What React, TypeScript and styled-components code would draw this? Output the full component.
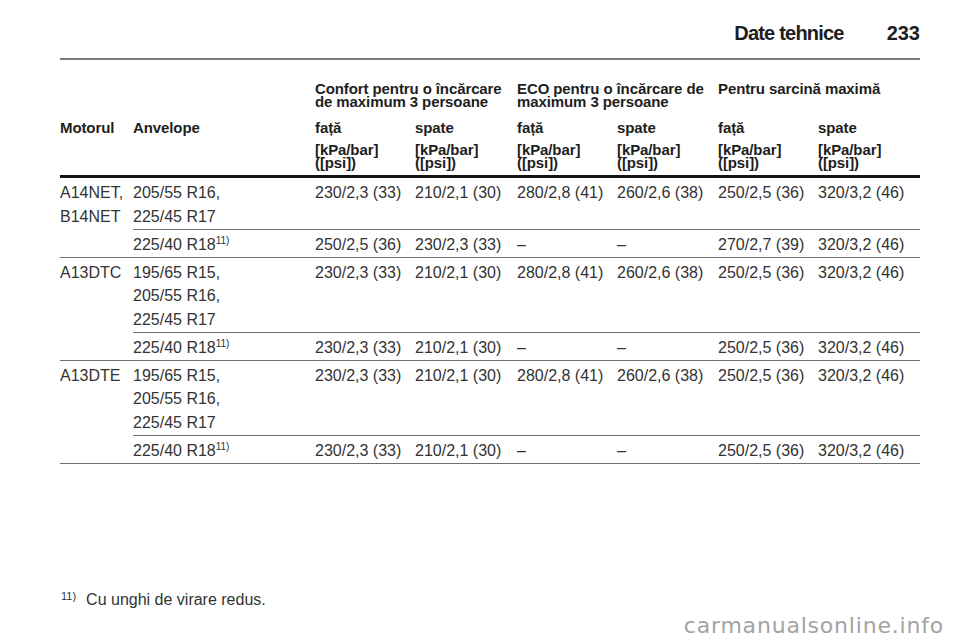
import React from "react";
import styled, { createGlobalStyle } from "styled-components";

const GlobalStyle = createGlobalStyle`
  html, body { margin: 0; padding: 0; background: #ffffff; }
  body { font-family: "Liberation Sans", Arial, sans-serif; color: #333; }
`;

const Page = styled.div`
  position: relative;
  width: 960px;
  height: 642px;
  box-sizing: border-box;
  padding: 0 40px 31px 60px;
  display: flex;
  flex-direction: column;
  overflow: hidden;
`;

const TopBar = styled.header`
  display: flex;
  justify-content: flex-end;
  gap: 43px;
  padding-top: 21px;
  padding-bottom: 13px;
  border-bottom: 2px solid #7a7a7a;
  font-weight: bold;
  font-size: 20px;
  line-height: 24px;
  color: #1e1e1e;
`;

const Title = styled.span`
  letter-spacing: -0.8px;
`;

const PageNo = styled.span`
  letter-spacing: 0;
`;

const Table = styled.table`
  margin-top: 22px;
  width: 860px;
  table-layout: fixed;
  border-collapse: separate;
  border-spacing: 0;
`;

const HeadCell = styled.th<{ $row: 1 | 2 | 3 }>`
  text-align: left;
  vertical-align: top;
  padding: 0;
  font-weight: bold;
  font-size: 15px;
  letter-spacing: -0.1px;
  color: #1e1e1e;
  white-space: pre-line;
  line-height: ${(p) => (p.$row === 2 ? "20px" : "13px")};
  padding-bottom: ${(p) => (p.$row === 1 ? "10px" : p.$row === 2 ? "5px" : "6px")};
  border-bottom: ${(p) => (p.$row === 3 ? "3px solid #151515" : "none")};
`;

const Cell = styled.td`
  vertical-align: top;
  padding: 3px 0 0.5px 0;
  font-size: 16px;
  line-height: 23.5px;
  color: #333;
  white-space: nowrap;
  border-bottom: 1px solid #6e6e6e;
`;

const Line = styled.div``;

const Sup = styled.span`
  font-size: 10px;
  line-height: 0;
  vertical-align: 6px;
`;

const Footnote = styled.div`
  margin-top: auto;
  display: flex;
  align-items: baseline;
  gap: 10px;
  padding-left: 1px;
  font-size: 16px;
  line-height: 20px;
  color: #333;
`;

const FootMark = styled.span`
  font-size: 11px;
  position: relative;
  top: -5px;
`;

const Watermark = styled.div`
  position: absolute;
  right: 16px;
  bottom: 2px;
  font-family: "DejaVu Sans", sans-serif;
  font-size: 22px;
  letter-spacing: 0.8px;
  color: #a3a3a3;
  line-height: 28px;
`;

const colWidths = [73, 182, 100, 102, 100, 101, 100, 102];

type SubRow = { tyres: string[]; sup?: boolean; vals: string[] };
type Group = { motor: string[]; rows: SubRow[] };

const std = ["230/2,3 (33)", "210/2,1 (30)", "280/2,8 (41)", "260/2,6 (38)", "250/2,5 (36)", "320/3,2 (46)"];

const groups: Group[] = [
  {
    motor: ["A14NET,", "B14NET"],
    rows: [
      { tyres: ["205/55 R16,", "225/45 R17"], vals: std },
      { tyres: ["225/40 R18"], sup: true, vals: ["250/2,5 (36)", "230/2,3 (33)", "–", "–", "270/2,7 (39)", "320/3,2 (46)"] },
    ],
  },
  {
    motor: ["A13DTC"],
    rows: [
      { tyres: ["195/65 R15,", "205/55 R16,", "225/45 R17"], vals: std },
      { tyres: ["225/40 R18"], sup: true, vals: ["230/2,3 (33)", "210/2,1 (30)", "–", "–", "250/2,5 (36)", "320/3,2 (46)"] },
    ],
  },
  {
    motor: ["A13DTE"],
    rows: [
      { tyres: ["195/65 R15,", "205/55 R16,", "225/45 R17"], vals: std },
      { tyres: ["225/40 R18"], sup: true, vals: ["230/2,3 (33)", "210/2,1 (30)", "–", "–", "250/2,5 (36)", "320/3,2 (46)"] },
    ],
  },
];

const groupTitles = [
  "Confort pentru o încărcare\nde maximum 3 persoane",
  "ECO pentru o încărcare de\nmaximum 3 persoane",
  "Pentru sarcină maximă",
];

const axles = ["față", "spate", "față", "spate", "față", "spate"];

export default function App() {
  return (
    <>
      <GlobalStyle />
      <Page>
        <TopBar>
          <Title>Date tehnice</Title>
          <PageNo>233</PageNo>
        </TopBar>
        <Table>
          <colgroup>
            {colWidths.map((w, i) => (
              <col key={i} style={{ width: w }} />
            ))}
          </colgroup>
          <thead>
            <tr>
              <HeadCell $row={1} colSpan={2} />
              {groupTitles.map((t) => (
                <HeadCell $row={1} colSpan={2} key={t}>
                  {t}
                </HeadCell>
              ))}
            </tr>
            <tr>
              <HeadCell $row={2}>Motorul</HeadCell>
              <HeadCell $row={2}>Anvelope</HeadCell>
              {axles.map((a, i) => (
                <HeadCell $row={2} key={i}>
                  {a}
                </HeadCell>
              ))}
            </tr>
            <tr>
              <HeadCell $row={3} colSpan={2} />
              {axles.map((_, i) => (
                <HeadCell $row={3} key={i}>
                  {"[kPa/bar]\n([psi])"}
                </HeadCell>
              ))}
            </tr>
          </thead>
          <tbody>
            {groups.map((g) =>
              g.rows.map((r, ri) => (
                <tr key={g.motor[0] + ri}>
                  {ri === 0 && (
                    <Cell rowSpan={g.rows.length}>
                      {g.motor.map((m) => (
                        <Line key={m}>{m}</Line>
                      ))}
                    </Cell>
                  )}
                  <Cell>
                    {r.tyres.map((t) => (
                      <Line key={t}>
                        {t}
                        {r.sup && <Sup>11)</Sup>}
                      </Line>
                    ))}
                  </Cell>
                  {r.vals.map((v, vi) => (
                    <Cell key={vi}>{v}</Cell>
                  ))}
                </tr>
              ))
            )}
          </tbody>
        </Table>
        <Footnote>
          <FootMark>11)</FootMark>
          <span>Cu unghi de virare redus.</span>
        </Footnote>
        <Watermark>carmanualsonline.info</Watermark>
      </Page>
    </>
  );
}
